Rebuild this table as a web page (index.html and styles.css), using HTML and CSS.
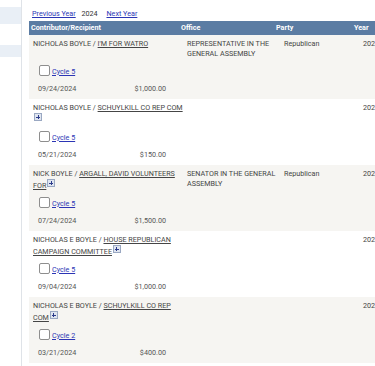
FILE: index.html
```html
<!DOCTYPE html>
<html>
<head>
<meta charset="utf-8">
<link rel="stylesheet" href="styles.css">
</head>
<body>
<div class="layout">
  <aside class="sidebar">
    <div class="band band-1"></div>
    <div class="band band-2"></div>
  </aside>
  <main class="main">
    <div class="yearnav">
      <a href="#" class="navlink">Previous Year</a>
      <span class="curyear">2024</span>
      <a href="#" class="navlink">Next Year</a>
    </div>
    <table class="results">
      <colgroup>
        <col class="w-contrib"><col class="w-office"><col class="w-party"><col class="w-year">
      </colgroup>
      <thead>
        <tr><th>Contributor/Recipient</th><th class="th-office">Office</th><th>Party</th><th>Year</th></tr>
      </thead>
      <tbody class="rec shade">
        <tr class="main-row">
          <td class="contrib"><div class="name">NICHOLAS BOYLE / <span class="rcpt">I'M FOR WATRO</span></div></td>
          <td class="office">REPRESENTATIVE IN THE<br>GENERAL ASSEMBLY</td>
          <td class="party">Republican</td>
          <td class="year">2024</td>
        </tr>
        <tr class="detail-row">
          <td class="detail">
            <div class="cycle"><span class="chk"></span><a href="#" class="cyclelink">Cycle 5</a></div>
            <div class="amt"><span>09/24/2024</span><span>$1,000.00</span></div>
          </td>
          <td colspan="3"></td>
        </tr>
      </tbody>
      <tbody class="rec">
        <tr class="main-row">
          <td class="contrib"><div class="name">NICHOLAS BOYLE / <span class="rcpt">SCHUYLKILL CO REP COM</span> <span class="plus"></span></div></td>
          <td class="office"></td>
          <td class="party"></td>
          <td class="year">2024</td>
        </tr>
        <tr class="detail-row">
          <td class="detail">
            <div class="cycle"><span class="chk"></span><a href="#" class="cyclelink">Cycle 5</a></div>
            <div class="amt"><span>05/21/2024</span><span>$150.00</span></div>
          </td>
          <td colspan="3"></td>
        </tr>
      </tbody>
      <tbody class="rec shade">
        <tr class="main-row">
          <td class="contrib"><div class="name">NICK BOYLE / <span class="rcpt">ARGALL, DAVID VOLUNTEERS FOR</span><span class="plus"></span></div></td>
          <td class="office">SENATOR IN THE GENERAL<br>ASSEMBLY</td>
          <td class="party">Republican</td>
          <td class="year">2024</td>
        </tr>
        <tr class="detail-row">
          <td class="detail">
            <div class="cycle"><span class="chk"></span><a href="#" class="cyclelink">Cycle 5</a></div>
            <div class="amt"><span>07/24/2024</span><span>$1,500.00</span></div>
          </td>
          <td colspan="3"></td>
        </tr>
      </tbody>
      <tbody class="rec">
        <tr class="main-row">
          <td class="contrib"><div class="name">NICHOLAS E BOYLE / <span class="rcpt">HOUSE REPUBLICAN CAMPAIGN COMMITTEE</span><span class="plus"></span></div></td>
          <td class="office"></td>
          <td class="party"></td>
          <td class="year">2024</td>
        </tr>
        <tr class="detail-row">
          <td class="detail">
            <div class="cycle"><span class="chk"></span><a href="#" class="cyclelink">Cycle 5</a></div>
            <div class="amt"><span>09/04/2024</span><span>$1,000.00</span></div>
          </td>
          <td colspan="3"></td>
        </tr>
      </tbody>
      <tbody class="rec shade">
        <tr class="main-row">
          <td class="contrib"><div class="name">NICHOLAS E BOYLE / <span class="rcpt">SCHUYLKILL CO REP COM</span><span class="plus"></span></div></td>
          <td class="office"></td>
          <td class="party"></td>
          <td class="year">2024</td>
        </tr>
        <tr class="detail-row">
          <td class="detail">
            <div class="cycle"><span class="chk"></span><a href="#" class="cyclelink">Cycle 2</a></div>
            <div class="amt"><span>03/21/2024</span><span>$400.00</span></div>
          </td>
          <td colspan="3"></td>
        </tr>
      </tbody>
    </table>
  </main>
</div>
</body>
</html>
```
FILE: styles.css
```css
html, body {
  margin: 0;
  padding: 0;
  overflow: hidden;
  background: #ffffff;
}
body {
  font-family: Roboto, "Liberation Sans", Arial, sans-serif;
  font-size: 7.2px;
  color: #454545;
}
.layout {
  display: flex;
  align-items: stretch;
  min-height: 366px;
}
.sidebar {
  flex: 0 0 21px;
  border-right: 1px solid #dfe3e8;
  padding-top: 7px;
}
.band {
  background: #e9eff6;
}
.band-1 { height: 17px; margin-bottom: 21px; }
.band-2 { height: 12px; }
.main {
  flex: 1 1 auto;
  padding: 7px 0 0 7px;
  min-width: 0;
}
.yearnav {
  height: 14px;
  line-height: 14px;
  padding-left: 3px;
  white-space: nowrap;
}
.navlink {
  color: #2b35b5;
  text-decoration: underline;
}
.curyear {
  color: #333;
  margin: 0 7px 0 4px;
}
.results {
  border-collapse: collapse;
  table-layout: fixed;
  width: 363px;
}
.w-contrib { width: 152px; }
.w-office { width: 93px; }
.w-party { width: 78px; }
.w-year { width: 40px; }
.results th {
  background: #5b7ca3;
  color: #ffffff;
  font-weight: bold;
  text-align: left;
  height: 14px;
  line-height: 14px;
  padding: 0 0 0 2px;
  white-space: nowrap;
}
.results th.th-office {
  padding-left: 0;
}
.results td {
  vertical-align: top;
  padding: 0;
  line-height: 10px;
}
.rec.shade td {
  background: #f6f5f2;
}
.main-row td {
  padding-top: 4px;
  padding-bottom: 2px;
}
.main-row td.contrib { padding-left: 4px; padding-right: 0; }
.name { margin-right: -4px; }
.main-row td.office { padding-left: 6px; white-space: nowrap; }
.main-row td.party { padding-left: 10px; }
.main-row td.year { padding-left: 11px; white-space: nowrap; }
.rcpt {
  text-decoration: underline;
}
.plus {
  display: inline-block;
  width: 6px;
  height: 6px;
  border: 1px solid #9aa8c2;
  background: #dfe5f0;
  vertical-align: -1px;
  margin-left: 1px;
  margin-bottom: 2px;
  position: relative;
}
.plus::before,
.plus::after {
  content: "";
  position: absolute;
  background: #2b3a8a;
}
.plus::before { left: 1px; top: 2.5px; width: 4px; height: 1px; }
.plus::after { left: 2.5px; top: 1px; width: 1px; height: 4px; }
.detail-row td.detail {
  padding: 4px 15px 5px 9px;
}
.cycle {
  display: flex;
  align-items: flex-end;
  height: 13px;
  margin-bottom: 6px;
  padding-left: 1px;
}
.chk {
  display: inline-block;
  box-sizing: border-box;
  width: 11px;
  height: 11px;
  border: 1px solid #8e8e8e;
  border-radius: 2px;
  background: #ffffff;
  margin-right: 2px;
  align-self: flex-start;
}
.cyclelink {
  color: #2b35b5;
  text-decoration: underline;
  line-height: 10px;
  padding-bottom: 1px;
}
.amt {
  display: flex;
  justify-content: space-between;
  line-height: 10px;
  color: #555;
}
```
